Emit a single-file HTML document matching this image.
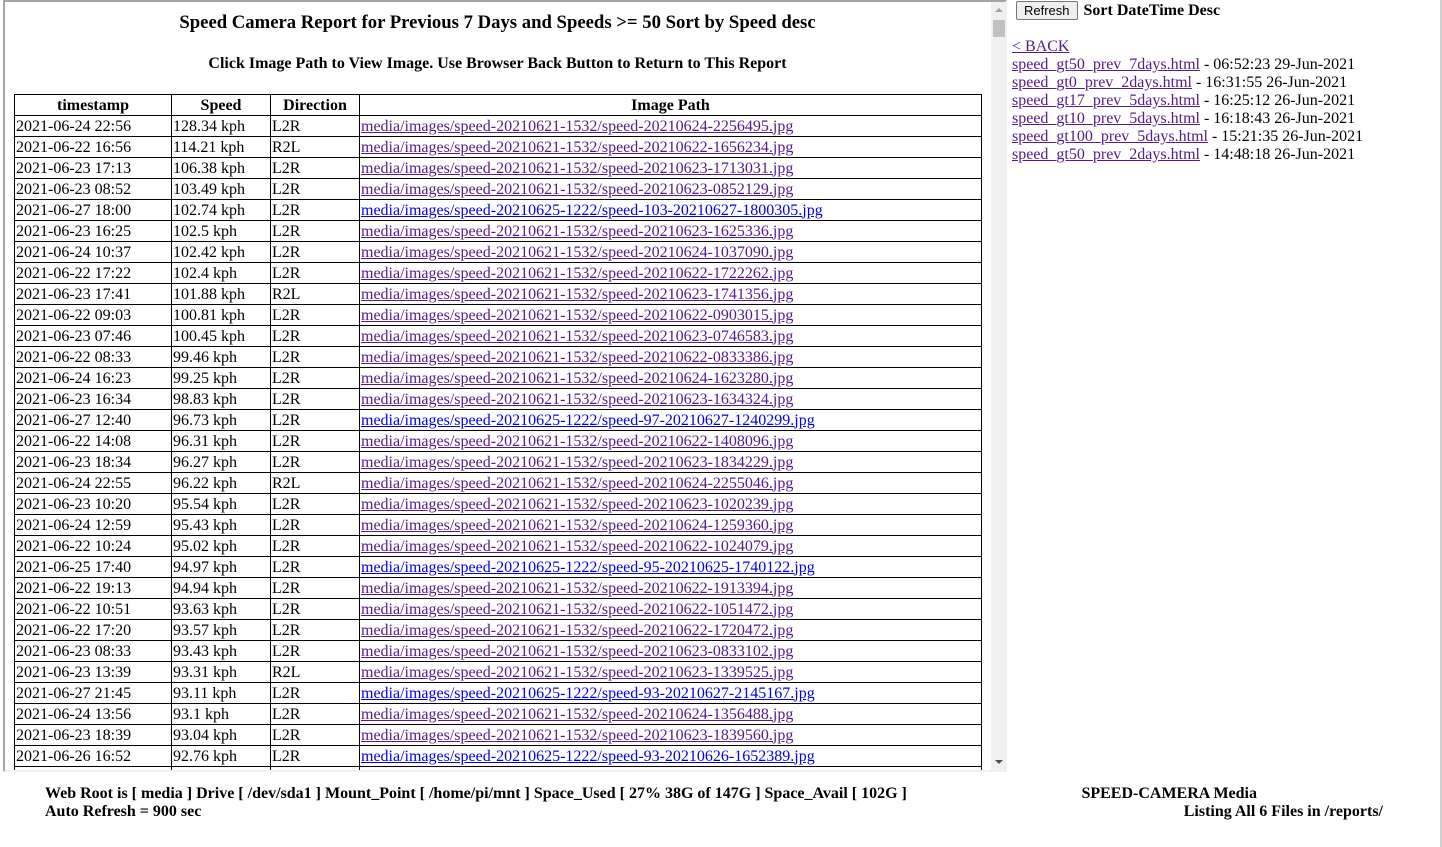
<!DOCTYPE html>
<html><head><meta charset="utf-8"><style>
body{margin:0;width:1442px;height:847px;overflow:hidden;background:#fff;font-family:"Liberation Serif",serif;color:#000;position:relative}
#frame{position:absolute;left:3px;top:0;width:1000px;height:768px;border:2px solid #a5a5a5;border-right:2px solid #f0f0f0;border-bottom:2px solid #f0f0f0;overflow:hidden;background:#fff}
#sb{position:absolute;left:986px;top:0;width:17px;height:768px;background:#f0f0f0}
#thumb{position:absolute;left:2px;top:18px;width:13px;height:17px;background:#c1c1c1}
h1{font-size:18.7px;margin:0;position:absolute;top:10px;left:0;width:985px;text-align:center}
h2{font-size:16px;margin:0;position:absolute;top:53px;left:0;width:985px;text-align:center}
table{position:absolute;left:9px;top:92px;border-collapse:collapse;width:968px;font-size:16px}
td,th{border:1px solid #000;padding:0 1px;height:20px;line-height:19px;white-space:nowrap}
th{font-size:16px}
a{color:#551a8b}
a.b{color:#0000ee}
#right{position:absolute;left:1012px;top:0;font-size:16px;line-height:18px}
button{font-family:"Liberation Sans",sans-serif;font-size:13px;padding:1px 7px;border:1px solid #767676;border-radius:2px;background:#efefef;margin:0 6px 0 4px}
.foot{position:absolute;top:785px;font-weight:bold;font-size:16px;line-height:18px}
</style></head><body>
<div id="frame">
<h1>Speed Camera Report for Previous 7 Days and Speeds &gt;= 50 Sort by Speed desc</h1>
<h2>Click Image Path to View Image. Use Browser Back Button to Return to This Report</h2>
<table>
<tr><th style="width:154px">timestamp</th><th style="width:96px">Speed</th><th style="width:86px">Direction</th><th>Image Path</th></tr>
<tr><td>2021-06-24 22:56</td><td>128.34 kph</td><td>L2R</td><td><a href="#">media/images/speed-20210621-1532/speed-20210624-2256495.jpg</a></td></tr>
<tr><td>2021-06-22 16:56</td><td>114.21 kph</td><td>R2L</td><td><a href="#">media/images/speed-20210621-1532/speed-20210622-1656234.jpg</a></td></tr>
<tr><td>2021-06-23 17:13</td><td>106.38 kph</td><td>L2R</td><td><a href="#">media/images/speed-20210621-1532/speed-20210623-1713031.jpg</a></td></tr>
<tr><td>2021-06-23 08:52</td><td>103.49 kph</td><td>L2R</td><td><a href="#">media/images/speed-20210621-1532/speed-20210623-0852129.jpg</a></td></tr>
<tr><td>2021-06-27 18:00</td><td>102.74 kph</td><td>L2R</td><td><a class="b" href="#">media/images/speed-20210625-1222/speed-103-20210627-1800305.jpg</a></td></tr>
<tr><td>2021-06-23 16:25</td><td>102.5 kph</td><td>L2R</td><td><a href="#">media/images/speed-20210621-1532/speed-20210623-1625336.jpg</a></td></tr>
<tr><td>2021-06-24 10:37</td><td>102.42 kph</td><td>L2R</td><td><a href="#">media/images/speed-20210621-1532/speed-20210624-1037090.jpg</a></td></tr>
<tr><td>2021-06-22 17:22</td><td>102.4 kph</td><td>L2R</td><td><a href="#">media/images/speed-20210621-1532/speed-20210622-1722262.jpg</a></td></tr>
<tr><td>2021-06-23 17:41</td><td>101.88 kph</td><td>R2L</td><td><a href="#">media/images/speed-20210621-1532/speed-20210623-1741356.jpg</a></td></tr>
<tr><td>2021-06-22 09:03</td><td>100.81 kph</td><td>L2R</td><td><a href="#">media/images/speed-20210621-1532/speed-20210622-0903015.jpg</a></td></tr>
<tr><td>2021-06-23 07:46</td><td>100.45 kph</td><td>L2R</td><td><a href="#">media/images/speed-20210621-1532/speed-20210623-0746583.jpg</a></td></tr>
<tr><td>2021-06-22 08:33</td><td>99.46 kph</td><td>L2R</td><td><a href="#">media/images/speed-20210621-1532/speed-20210622-0833386.jpg</a></td></tr>
<tr><td>2021-06-24 16:23</td><td>99.25 kph</td><td>L2R</td><td><a href="#">media/images/speed-20210621-1532/speed-20210624-1623280.jpg</a></td></tr>
<tr><td>2021-06-23 16:34</td><td>98.83 kph</td><td>L2R</td><td><a href="#">media/images/speed-20210621-1532/speed-20210623-1634324.jpg</a></td></tr>
<tr><td>2021-06-27 12:40</td><td>96.73 kph</td><td>L2R</td><td><a class="b" href="#">media/images/speed-20210625-1222/speed-97-20210627-1240299.jpg</a></td></tr>
<tr><td>2021-06-22 14:08</td><td>96.31 kph</td><td>L2R</td><td><a href="#">media/images/speed-20210621-1532/speed-20210622-1408096.jpg</a></td></tr>
<tr><td>2021-06-23 18:34</td><td>96.27 kph</td><td>L2R</td><td><a href="#">media/images/speed-20210621-1532/speed-20210623-1834229.jpg</a></td></tr>
<tr><td>2021-06-24 22:55</td><td>96.22 kph</td><td>R2L</td><td><a href="#">media/images/speed-20210621-1532/speed-20210624-2255046.jpg</a></td></tr>
<tr><td>2021-06-23 10:20</td><td>95.54 kph</td><td>L2R</td><td><a href="#">media/images/speed-20210621-1532/speed-20210623-1020239.jpg</a></td></tr>
<tr><td>2021-06-24 12:59</td><td>95.43 kph</td><td>L2R</td><td><a href="#">media/images/speed-20210621-1532/speed-20210624-1259360.jpg</a></td></tr>
<tr><td>2021-06-22 10:24</td><td>95.02 kph</td><td>L2R</td><td><a href="#">media/images/speed-20210621-1532/speed-20210622-1024079.jpg</a></td></tr>
<tr><td>2021-06-25 17:40</td><td>94.97 kph</td><td>L2R</td><td><a class="b" href="#">media/images/speed-20210625-1222/speed-95-20210625-1740122.jpg</a></td></tr>
<tr><td>2021-06-22 19:13</td><td>94.94 kph</td><td>L2R</td><td><a href="#">media/images/speed-20210621-1532/speed-20210622-1913394.jpg</a></td></tr>
<tr><td>2021-06-22 10:51</td><td>93.63 kph</td><td>L2R</td><td><a href="#">media/images/speed-20210621-1532/speed-20210622-1051472.jpg</a></td></tr>
<tr><td>2021-06-22 17:20</td><td>93.57 kph</td><td>L2R</td><td><a href="#">media/images/speed-20210621-1532/speed-20210622-1720472.jpg</a></td></tr>
<tr><td>2021-06-23 08:33</td><td>93.43 kph</td><td>L2R</td><td><a href="#">media/images/speed-20210621-1532/speed-20210623-0833102.jpg</a></td></tr>
<tr><td>2021-06-23 13:39</td><td>93.31 kph</td><td>R2L</td><td><a href="#">media/images/speed-20210621-1532/speed-20210623-1339525.jpg</a></td></tr>
<tr><td>2021-06-27 21:45</td><td>93.11 kph</td><td>L2R</td><td><a class="b" href="#">media/images/speed-20210625-1222/speed-93-20210627-2145167.jpg</a></td></tr>
<tr><td>2021-06-24 13:56</td><td>93.1 kph</td><td>L2R</td><td><a href="#">media/images/speed-20210621-1532/speed-20210624-1356488.jpg</a></td></tr>
<tr><td>2021-06-23 18:39</td><td>93.04 kph</td><td>L2R</td><td><a href="#">media/images/speed-20210621-1532/speed-20210623-1839560.jpg</a></td></tr>
<tr><td>2021-06-26 16:52</td><td>92.76 kph</td><td>L2R</td><td><a class="b" href="#">media/images/speed-20210625-1222/speed-93-20210626-1652389.jpg</a></td></tr>
<tr><td>2021-06-22 10:00</td><td>92.5 kph</td><td>L2R</td><td><a href="#">media/images/speed-20210621-1532/speed-20210622-1000000.jpg</a></td></tr>
</table>
<div id="sb"><div style="position:absolute;left:4px;top:6px;width:0;height:0;border-left:4px solid transparent;border-right:4px solid transparent;border-bottom:4px solid #a3a3a3"></div><div id="thumb"></div><div style="position:absolute;left:4px;top:758px;width:0;height:0;border-left:4px solid transparent;border-right:4px solid transparent;border-top:4px solid #505050"></div></div>
</div>
<div id="right">
<div style="height:22px;line-height:22px"><button>Refresh</button><b>Sort DateTime Desc</b></div>
<div style="margin-top:16px">
<a href="#">&lt; BACK</a><br>
<a href="#">speed_gt50_prev_7days.html</a> - 06:52:23 29-Jun-2021<br>
<a href="#">speed_gt0_prev_2days.html</a> - 16:31:55 26-Jun-2021<br>
<a href="#">speed_gt17_prev_5days.html</a> - 16:25:12 26-Jun-2021<br>
<a href="#">speed_gt10_prev_5days.html</a> - 16:18:43 26-Jun-2021<br>
<a href="#">speed_gt100_prev_5days.html</a> - 15:21:35 26-Jun-2021<br>
<a href="#">speed_gt50_prev_2days.html</a> - 14:48:18 26-Jun-2021
</div></div>
<div class="foot" style="left:45px">Web Root is [ media ] Drive [ /dev/sda1 ] Mount_Point [ /home/pi/mnt ] Space_Used [ 27% 38G of 147G ] Space_Avail [ 102G ]<br>Auto Refresh = 900 sec</div>
<div class="foot" style="left:1000px;width:383px;text-align:right"><span style="position:relative;left:-126px">SPEED-CAMERA Media</span><br>Listing All 6 Files in /reports/</div>
<div style="position:absolute;left:1440px;top:0;width:2px;height:847px;background:#d0d0d0"></div>
</body></html>
